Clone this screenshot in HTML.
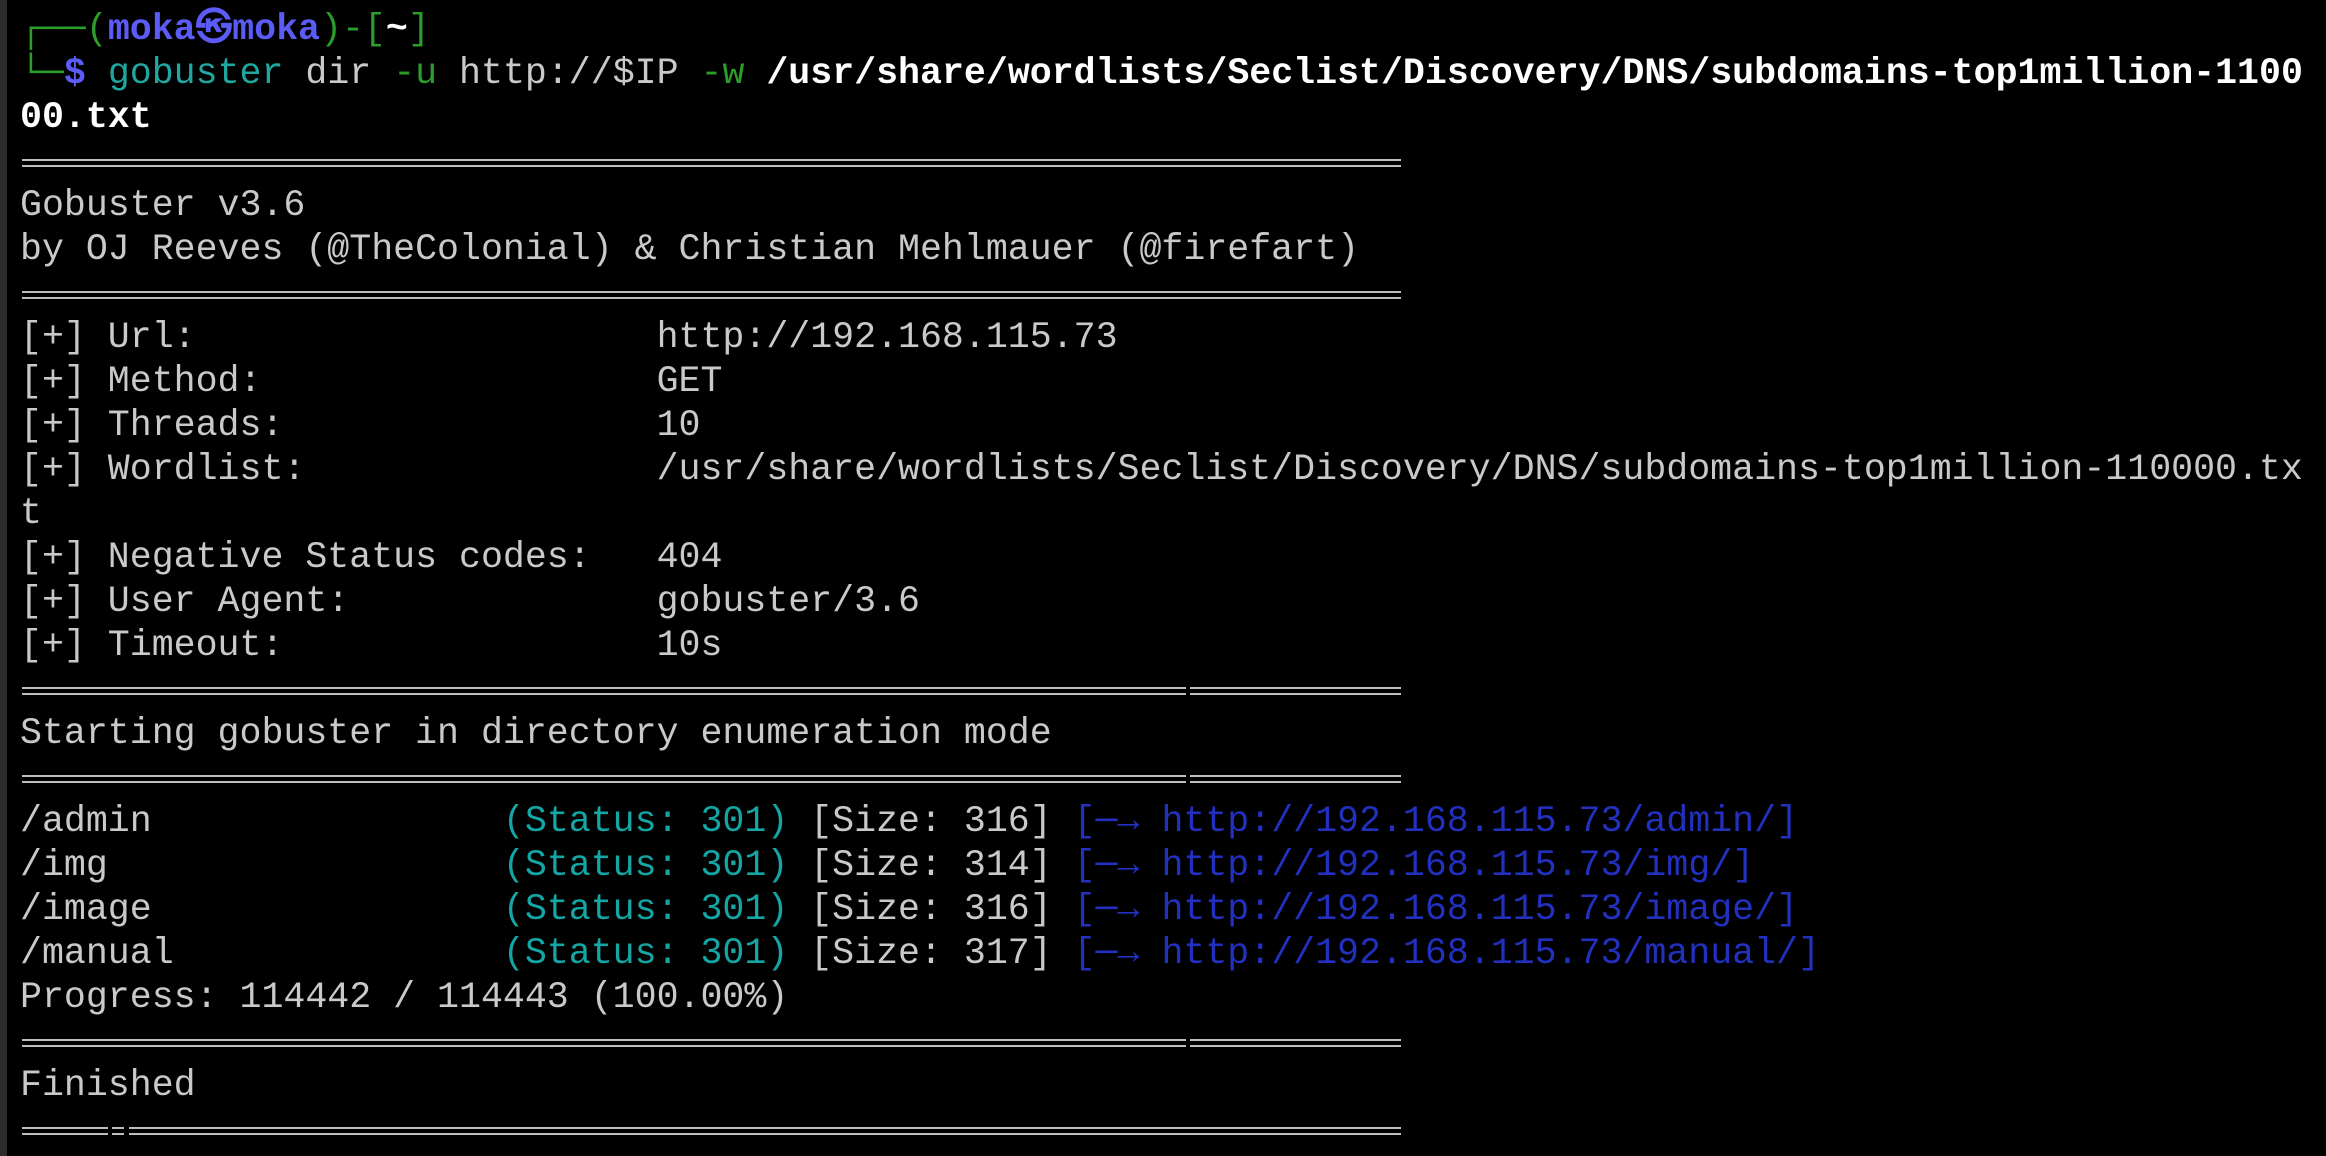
<!DOCTYPE html>
<html><head><meta charset="utf-8"><style>
html,body{margin:0;padding:0;background:#000;width:2326px;height:1156px;overflow:hidden;position:relative}
.bar{position:absolute;left:0;top:0;width:7px;height:1156px;background:#2c2c2e}
pre{position:absolute;left:20px;top:8px;margin:0;font-family:"Liberation Mono","DejaVu Sans Mono",monospace;font-size:36.6px;line-height:44px;color:#c9c9c9;letter-spacing:0}
.g{color:#2a9d2a}.b{color:#5b5bf5;font-weight:bold}.w{color:#fff;font-weight:bold}.t{color:#1fa8a0}.c{color:#14a5a5}.l{color:#2230c0}
.r{position:absolute;height:2px;background:#bdbdbd}
</style></head><body>
<div class="bar"></div>
<pre><span class="g">┌──(</span><span class="b">moka㉿moka</span><span class="g">)-[</span><span class="w">~</span><span class="g">]</span>
<span class="g">└─</span><span class="b">$</span> <span class="t">gobuster</span> dir <span class="g">-u</span> http://$IP <span class="g">-w</span> <span class="w">/usr/share/wordlists/Seclist/Discovery/DNS/subdomains-top1million-1100</span>
<span class="w">00.txt</span>

Gobuster v3.6
by OJ Reeves (@TheColonial) &amp; Christian Mehlmauer (@firefart)

[+] Url:                     http://192.168.115.73
[+] Method:                  GET
[+] Threads:                 10
[+] Wordlist:                /usr/share/wordlists/Seclist/Discovery/DNS/subdomains-top1million-110000.tx
t
[+] Negative Status codes:   404
[+] User Agent:              gobuster/3.6
[+] Timeout:                 10s

Starting gobuster in directory enumeration mode

/admin                <span class="c">(Status: 301)</span> [Size: 316] <span class="l">[─→ http://192.168.115.73/admin/]</span>
/img                  <span class="c">(Status: 301)</span> [Size: 314] <span class="l">[─→ http://192.168.115.73/img/]</span>
/image                <span class="c">(Status: 301)</span> [Size: 316] <span class="l">[─→ http://192.168.115.73/image/]</span>
/manual               <span class="c">(Status: 301)</span> [Size: 317] <span class="l">[─→ http://192.168.115.73/manual/]</span>
Progress: 114442 / 114443 (100.00%)

Finished
</pre>
<div class="r" style="left:22px;width:1379px;top:159px"></div><div class="r" style="left:22px;width:1379px;top:165px"></div>
<div class="r" style="left:22px;width:1379px;top:291px"></div><div class="r" style="left:22px;width:1379px;top:297px"></div>
<div class="r" style="left:22px;width:1164px;top:687px"></div><div class="r" style="left:22px;width:1164px;top:693px"></div>
<div class="r" style="left:1190px;width:211px;top:687px"></div><div class="r" style="left:1190px;width:211px;top:693px"></div>
<div class="r" style="left:22px;width:1164px;top:775px"></div><div class="r" style="left:22px;width:1164px;top:781px"></div>
<div class="r" style="left:1190px;width:211px;top:775px"></div><div class="r" style="left:1190px;width:211px;top:781px"></div>
<div class="r" style="left:22px;width:1164px;top:1039px"></div><div class="r" style="left:22px;width:1164px;top:1045px"></div>
<div class="r" style="left:1190px;width:211px;top:1039px"></div><div class="r" style="left:1190px;width:211px;top:1045px"></div>
<div class="r" style="left:22px;width:86px;top:1127px"></div><div class="r" style="left:22px;width:86px;top:1133px"></div>
<div class="r" style="left:112px;width:12px;top:1127px"></div><div class="r" style="left:112px;width:12px;top:1133px"></div>
<div class="r" style="left:129px;width:1272px;top:1127px"></div><div class="r" style="left:129px;width:1272px;top:1133px"></div>
</body></html>
